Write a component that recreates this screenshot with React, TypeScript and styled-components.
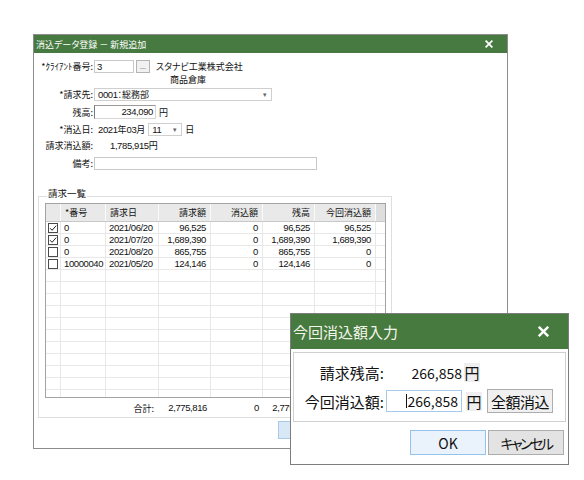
import styled, { createGlobalStyle, css } from "styled-components";

const GlobalStyle = createGlobalStyle`
  html, body {
    margin: 0;
    padding: 0;
    background: #ffffff;
  }
  body {
    font-family: "Noto Sans CJK JP", "Noto Sans", sans-serif;
    color: #111;
  }
`;

type Invoice = {
  checked: boolean;
  no: string;
  date: string;
  amount: string;
  cleared: string;
  balance: string;
  current: string;
};

const invoices: Invoice[] = [
  { checked: true, no: "0", date: "2021/06/20", amount: "96,525", cleared: "0", balance: "96,525", current: "96,525" },
  { checked: true, no: "0", date: "2021/07/20", amount: "1,689,390", cleared: "0", balance: "1,689,390", current: "1,689,390" },
  { checked: false, no: "0", date: "2021/08/20", amount: "865,755", cleared: "0", balance: "865,755", current: "0" },
  { checked: false, no: "10000040", date: "2021/05/20", amount: "124,146", cleared: "0", balance: "124,146", current: "0" },
];

const EMPTY_ROWS = 12;
const COLUMNS = "15px 45px 53px 52px 52px 52px 61px 1fr";

// tight digits, like the condensed UI font in the screenshot
const numFont = css`
  font-family: "Liberation Sans", "Noto Sans CJK JP", sans-serif;
  font-size: 9.5px;
  letter-spacing: -0.4px;
`;

function CheckIcon({ checked }: { checked: boolean }) {
  return (
    <svg width="10" height="10" viewBox="0 0 10 10">
      <rect x="0.5" y="0.5" width="9" height="9" fill="#fff" stroke="#4a4a4a" />
      {checked ? (
        <path d="M2 5.2 L4.1 7.3 L8.2 2.6" fill="none" stroke="#222" strokeWidth="1" />
      ) : null}
    </svg>
  );
}

function CloseIcon({ size }: { size: number }) {
  return (
    <svg width={size} height={size} viewBox="0 0 10 10">
      <path d="M1.5 1.5 L8.5 8.5 M8.5 1.5 L1.5 8.5" stroke="#fff" strokeWidth="2.2" strokeLinecap="square" />
    </svg>
  );
}

export default function App() {
  return (
    <>
      <GlobalStyle />
      <Screen>
        <Window>
          <TitleBar>
            <span>消込データ登録 － 新規追加</span>
            <CloseIcon size={8} />
          </TitleBar>

          <FormRow $top={7} $h={13}>
            <Label>*ｸﾗｲｱﾝﾄ番号:</Label>
            <TextBox $w={40}>3</TextBox>
            <DotsButton>...</DotsButton>
            <PlainText $left={6}>スタナビ工業株式会社</PlainText>
          </FormRow>
          <FormRow $top={0} $h={13}>
            <PlainText $left={136}>商品倉庫</PlainText>
          </FormRow>
          <FormRow $top={2} $h={13}>
            <Label>*請求先:</Label>
            <SelectBox $w={178}>
              <span>
                <Num>0001</Num>：総務部
              </span>
              <Arrow>▾</Arrow>
            </SelectBox>
          </FormRow>
          <FormRow $top={4} $h={14}>
            <Label>残高:</Label>
            <SunkenBox $w={62}>234,090</SunkenBox>
            <PlainText $left={3}>円</PlainText>
          </FormRow>
          <FormRow $top={4} $h={13}>
            <Label>*消込日:</Label>
            <PlainText $left={4}>
              <Num>2021</Num>年<Num>03</Num>月
            </PlainText>
            <SelectBox $w={34} $left={3}>
              <Num>11</Num>
              <Arrow>▾</Arrow>
            </SelectBox>
            <PlainText $left={3}>日</PlainText>
          </FormRow>
          <FormRow $top={3} $h={13}>
            <Label>請求消込額:</Label>
            <PlainText $left={16}>
              <Num>1,785,915</Num>円
            </PlainText>
          </FormRow>
          <FormRow $top={4} $h={14}>
            <Label>備考:</Label>
            <TextBox $w={223} />
          </FormRow>

          <GroupBox>
            <Legend>請求一覧</Legend>
            <Grid>
              <HeaderRow>
                <HeadCell />
                <HeadCell>*番号</HeadCell>
                <HeadCell>請求日</HeadCell>
                <HeadCell $right>請求額</HeadCell>
                <HeadCell $right>消込額</HeadCell>
                <HeadCell $right>残高</HeadCell>
                <HeadCell $right>今回消込額</HeadCell>
                <HeadCell $filler />
              </HeaderRow>
              <Body>
                {invoices.map((inv, i) => (
                  <DataRow key={i}>
                    <Cell $center>
                      <CheckIcon checked={inv.checked} />
                    </Cell>
                    <Cell>{inv.no}</Cell>
                    <Cell>{inv.date}</Cell>
                    <Cell $right>{inv.amount}</Cell>
                    <Cell $right>{inv.cleared}</Cell>
                    <Cell $right>{inv.balance}</Cell>
                    <Cell $right>{inv.current}</Cell>
                    <Cell />
                  </DataRow>
                ))}
                {Array.from({ length: EMPTY_ROWS }).map((_, i) => (
                  <DataRow key={`e${i}`}>
                    {Array.from({ length: 8 }).map((__, j) => (
                      <Cell key={j} />
                    ))}
                  </DataRow>
                ))}
              </Body>
            </Grid>
            <TotalRow>
              <span />
              <span />
              <TotalLabel>合計:</TotalLabel>
              <TotalCell>2,775,816</TotalCell>
              <TotalCell>0</TotalCell>
              <TotalCell>2,775,816</TotalCell>
            </TotalRow>
          </GroupBox>

          <WindowFooter>
            <BlueButton />
          </WindowFooter>
        </Window>

        <Dialog>
          <DialogTitle>
            <span>今回消込額入力</span>
            <CloseIcon size={11} />
          </DialogTitle>
          <DialogFrame>
            <DialogRow $h={19}>
              <DialogLabel>請求残高:</DialogLabel>
              <AmountText>266,858</AmountText>
              <YenBox $left={2}>円</YenBox>
            </DialogRow>
            <DialogRow $h={24} $top={7}>
              <DialogLabel>今回消込額:</DialogLabel>
              <AmountInput>
                <Caret />
                266,858
              </AmountInput>
              <YenBox $left={4}>円</YenBox>
              <FullButton>全額消込</FullButton>
            </DialogRow>
          </DialogFrame>
          <DialogButtons>
            <DialogButton $primary>OK</DialogButton>
            <DialogButton $narrow>キャンセル</DialogButton>
          </DialogButtons>
        </Dialog>
      </Screen>
    </>
  );
}

const Screen = styled.div`
  position: relative;
  width: 584px;
  height: 480px;
  box-sizing: border-box;
  padding: 34px 0 0 33px;
  overflow: hidden;
`;

const Window = styled.div`
  width: 475px;
  height: 415px;
  box-sizing: border-box;
  border: 1px solid #8c8c8c;
  background: #fff;
  display: flex;
  flex-direction: column;
  font-size: 9px;
  line-height: 1;
  font-feature-settings: "palt";
`;

const TitleBar = styled.div`
  height: 18px;
  flex: none;
  background: #467a41;
  color: #fff;
  font-size: 9px;
  display: flex;
  align-items: center;
  justify-content: space-between;
  padding: 0 14px 0 2px;
`;

const FormRow = styled.div<{ $top: number; $h: number }>`
  display: flex;
  align-items: center;
  margin-top: ${(p) => p.$top}px;
  height: ${(p) => p.$h}px;
  flex: none;
`;

const Label = styled.div`
  width: 60px;
  text-align: right;
  padding-right: 1px;
  box-sizing: border-box;
  white-space: nowrap;
`;

const PlainText = styled.span<{ $left: number }>`
  margin-left: ${(p) => p.$left}px;
  white-space: nowrap;
`;

const Num = styled.span`
  ${numFont};
`;

const TextBox = styled.div<{ $w: number }>`
  ${numFont};
  width: ${(p) => p.$w}px;
  height: 13px;
  box-sizing: border-box;
  border: 1px solid #c9c9c9;
  padding: 0 2px;
  display: flex;
  align-items: center;
`;

const SunkenBox = styled(TextBox)`
  height: 14px;
  justify-content: flex-end;
  border-color: #d6d6d6;
  border-left-color: #7a7a7a;
  border-top-color: #9a9a9a;
`;

const DotsButton = styled.div`
  width: 14px;
  height: 13px;
  margin-left: 2px;
  box-sizing: border-box;
  border: 1px solid #b4b4b4;
  background: #f1f1f1;
  color: #666;
  font-size: 7px;
  display: flex;
  align-items: flex-end;
  justify-content: center;
  padding-bottom: 2px;
`;

const SelectBox = styled.div<{ $w: number; $left?: number }>`
  width: ${(p) => p.$w}px;
  height: 13px;
  margin-left: ${(p) => p.$left ?? 0}px;
  box-sizing: border-box;
  border: 1px solid #cfcfcf;
  padding: 0 4px 0 3px;
  display: flex;
  align-items: center;
  justify-content: space-between;
`;

const Arrow = styled.span`
  color: #666;
  font-size: 7px;
`;

const GroupBox = styled.div`
  position: relative;
  margin: 26px 0 0 4px;
  width: 354px;
  height: 222px;
  flex: none;
  box-sizing: border-box;
  border: 1px solid #dedede;
  padding: 6px 0 0 6px;
`;

const Legend = styled.span`
  position: absolute;
  top: -8px;
  left: 8px;
  background: #fff;
  padding: 0 1px;
  font-size: 9.5px;
`;

const Grid = styled.div`
  width: 341px;
  height: 195px;
  box-sizing: border-box;
  border: 1px solid #a3a3a3;
  display: flex;
  flex-direction: column;
  overflow: hidden;
`;

const HeaderRow = styled.div`
  display: grid;
  grid-template-columns: ${COLUMNS};
  height: 17px;
  flex: none;
  background: #e9e9e9;
  border-bottom: 1px solid #c8c8c8;
`;

const HeadCell = styled.div<{ $right?: boolean; $filler?: boolean }>`
  display: flex;
  align-items: center;
  justify-content: ${(p) => (p.$right ? "flex-end" : "flex-start")};
  padding: 0 4px;
  border-right: ${(p) => (p.$filler ? "none" : "1px solid #fafafa")};
  background: ${(p) => (p.$filler ? "#dedede" : "transparent")};
  white-space: nowrap;
  &:first-child {
    padding: 0;
  }
`;

const Body = styled.div`
  flex: 1;
  overflow: hidden;
`;

const DataRow = styled.div`
  display: grid;
  grid-template-columns: ${COLUMNS};
  height: 12px;
  border-bottom: 1px solid #e8e8e8;
  box-sizing: border-box;
`;

const Cell = styled.div<{ $right?: boolean; $center?: boolean }>`
  ${numFont};
  display: flex;
  align-items: center;
  justify-content: ${(p) => (p.$center ? "center" : p.$right ? "flex-end" : "flex-start")};
  padding: ${(p) => (p.$center ? "0" : p.$right ? "0 4px 0 2px" : "0 2px 0 3px")};
  border-right: 1px solid #e8e8e8;
  white-space: nowrap;
  overflow: hidden;
  &:last-child {
    border-right: none;
  }
`;

const TotalRow = styled.div`
  display: grid;
  grid-template-columns: ${COLUMNS};
  width: 341px;
  padding-left: 1px;
  box-sizing: border-box;
  height: 16px;
  align-items: center;
  margin-top: 2px;
`;

const TotalLabel = styled.span`
  text-align: right;
  padding-right: 5px;
  white-space: nowrap;
`;

const TotalCell = styled.span`
  ${numFont};
  text-align: right;
  padding-right: 4px;
  white-space: nowrap;
`;

const WindowFooter = styled.div`
  display: flex;
  padding-left: 244px;
  margin-top: 3px;
`;

const BlueButton = styled.div`
  width: 75px;
  height: 18px;
  box-sizing: border-box;
  border: 1px solid #a9c9e8;
  background: #d9e8f6;
`;

const Dialog = styled.div`
  position: absolute;
  left: 290px;
  top: 313px;
  width: 279px;
  height: 152px;
  box-sizing: border-box;
  border: 1px solid #7d7d7d;
  background: #fff;
  display: flex;
  flex-direction: column;
  font-size: 14px;
  line-height: 1;
  font-feature-settings: "palt";
`;

const DialogTitle = styled.div`
  height: 35px;
  flex: none;
  background: #467a3e;
  color: #f3f5ea;
  font-size: 15px;
  display: flex;
  align-items: center;
  justify-content: space-between;
  padding: 0 19px 0 2px;
`;

const DialogFrame = styled.div`
  margin: 3px 2px 0 2px;
  height: 70px;
  box-sizing: border-box;
  border: 1px solid #d0d0d0;
  padding-top: 10px;
`;

const DialogRow = styled.div<{ $h: number; $top?: number }>`
  display: flex;
  align-items: center;
  height: ${(p) => p.$h}px;
  margin-top: ${(p) => p.$top ?? 0}px;
`;

const DialogLabel = styled.div`
  width: 90px;
  text-align: right;
  white-space: nowrap;
  font-size: 15px;
`;

const AmountText = styled.div`
  width: 76px;
  margin-left: 2px;
  text-align: right;
`;

const YenBox = styled.div<{ $left: number }>`
  margin-left: ${(p) => p.$left}px;
  width: 16px;
  height: 19px;
  background: #efefef;
  display: flex;
  align-items: center;
  justify-content: center;
  font-size: 15px;
`;

const AmountInput = styled.div`
  width: 76px;
  height: 22px;
  margin-left: 2px;
  box-sizing: border-box;
  border: 1px solid #a8c9ea;
  display: flex;
  align-items: center;
  justify-content: flex-end;
  padding-right: 3px;
`;

const Caret = styled.span`
  width: 1px;
  height: 14px;
  background: #111;
`;

const FullButton = styled.div`
  margin-left: 5px;
  width: 66px;
  height: 24px;
  box-sizing: border-box;
  border: 1px solid #adadad;
  background: #f0f0f0;
  display: flex;
  align-items: center;
  justify-content: center;
  font-size: 15px;
  letter-spacing: -0.5px;
`;

const DialogButtons = styled.div`
  display: flex;
  justify-content: flex-end;
  gap: 2px;
  margin-top: 8px;
  padding-right: 4px;
`;

const DialogButton = styled.div<{ $primary?: boolean; $narrow?: boolean }>`
  width: 76px;
  height: 25px;
  box-sizing: border-box;
  border: 1px solid ${(p) => (p.$primary ? "#94c3ec" : "#adadad")};
  background: ${(p) => (p.$primary ? "#eaf3fb" : "#e3e3e3")};
  display: flex;
  align-items: center;
  justify-content: center;
  font-size: 14px;
  letter-spacing: ${(p) => (p.$narrow ? "-2.5px" : "0")};
`;
